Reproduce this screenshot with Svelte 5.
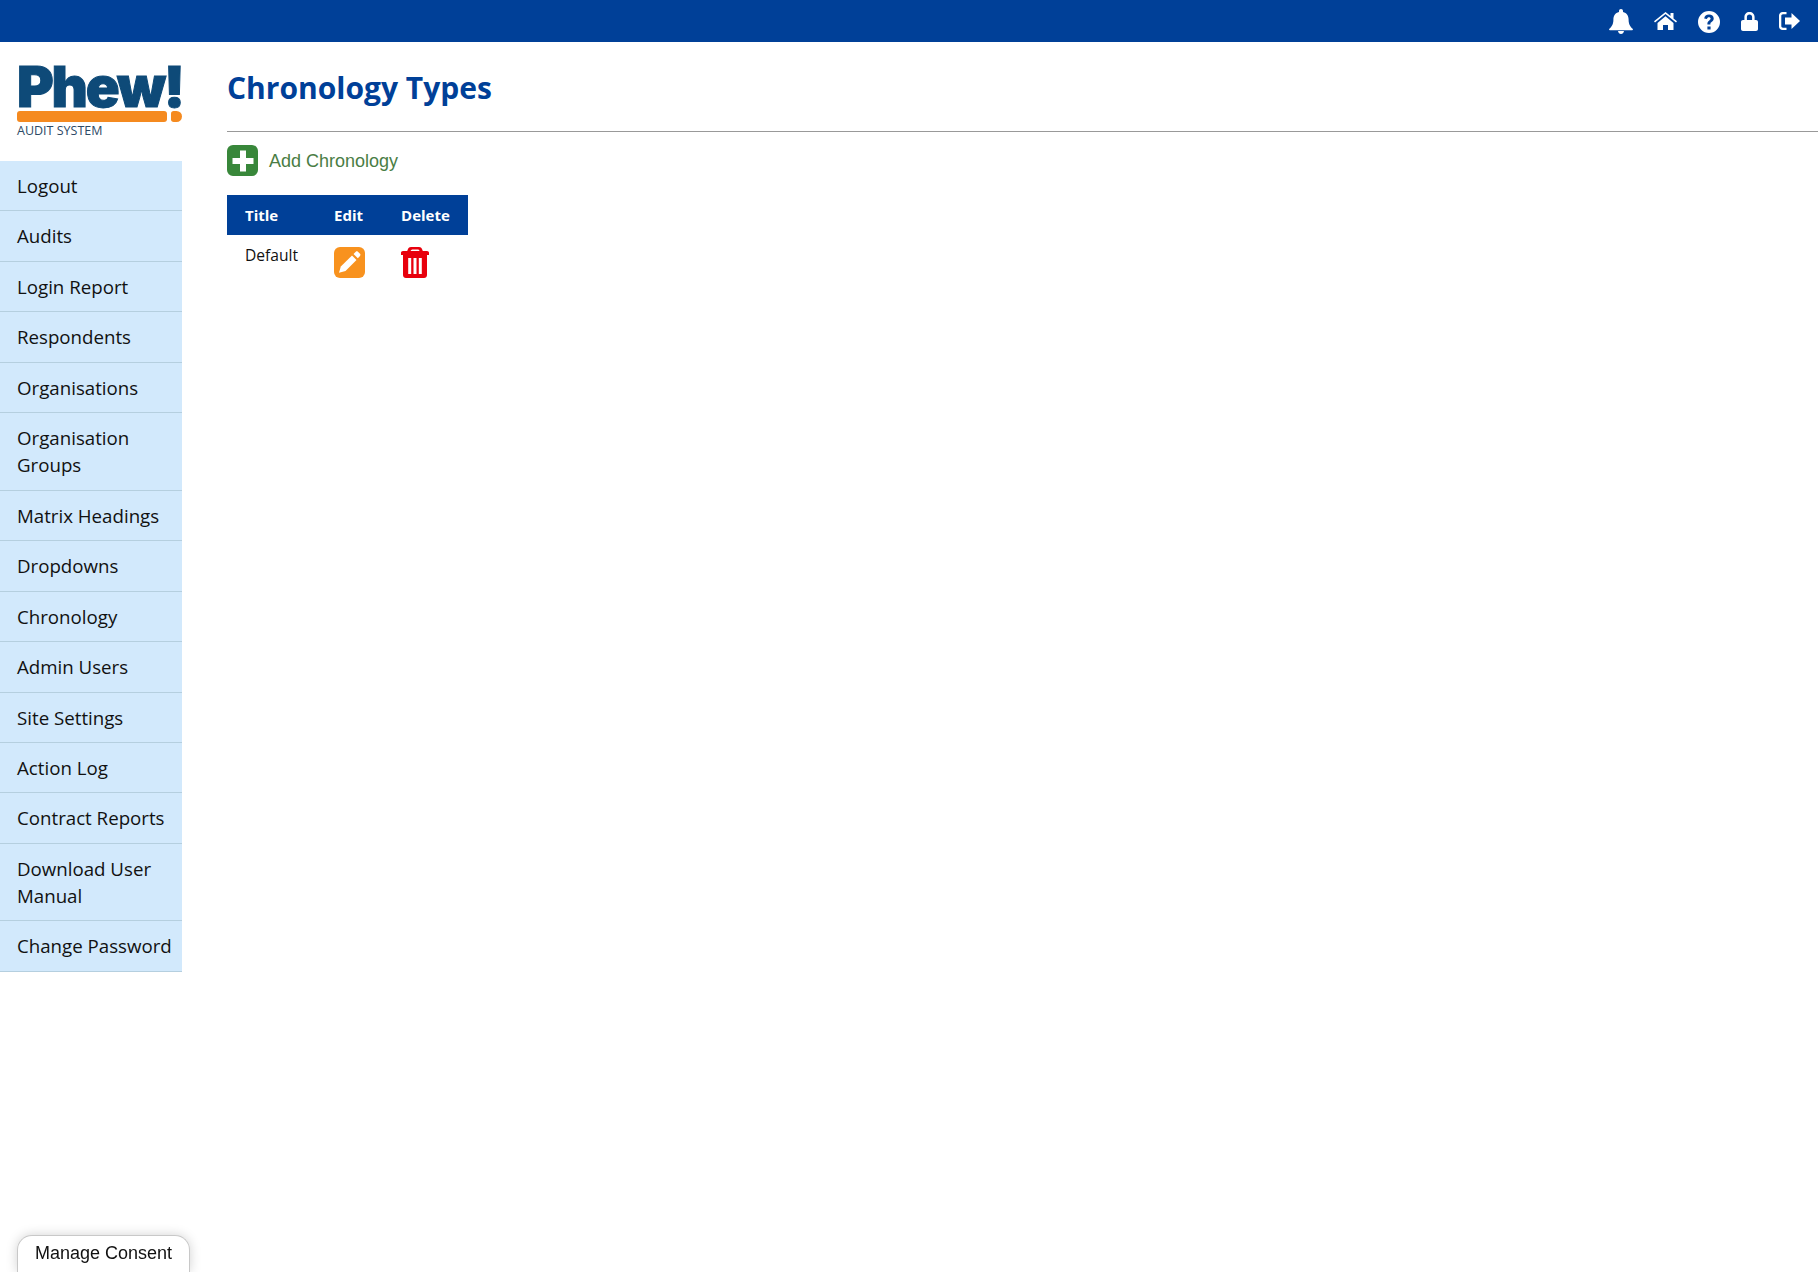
<script lang="ts">
  const menu = [
    "Logout",
    "Audits",
    "Login Report",
    "Respondents",
    "Organisations",
    "Organisation Groups",
    "Matrix Headings",
    "Dropdowns",
    "Chronology",
    "Admin Users",
    "Site Settings",
    "Action Log",
    "Contract Reports",
    "Download User Manual",
    "Change Password"
  ];
</script>

<header class="topbar">
  <svg class="ico" width="24" height="25" viewBox="0 0 24 25"><path d="M12 0c1.200 0 2 .9 2 2v.9c3.800.9 5.600 3.800 5.600 7.600 0 4.700 1.500 7 4 9.300.6.600.3 1.400-.5 1.400H.9c-.8 0-1.100-.8-.5-1.400 2.500-2.300 4-4.600 4-9.300 0-3.800 1.800-6.700 5.600-7.600V2c0-1.100.8-2 2-2zM9 22h6c-.3 1.700-1.500 3-3 3s-2.700-1.300-3-3z" /></svg>
  <svg class="ico" width="23" height="18" viewBox="0 0 23 18"><path d="M11.500 0 0 9.300l1 1.200L11.500 2 22 10.500l1-1.200-3.500-2.900V1h-3v3zM3.500 11v7h5.500v-5h5v5h5.500v-7l-8-6.700z" /></svg>
  <svg class="ico q" width="22" height="22" viewBox="0 0 22 22"><path fill-rule="evenodd" d="M11 0a11 11 0 1 1 0 22 11 11 0 0 1 0-22zM9.400 15.600v3h3.200v-3zM11 3.600c-2.700 0-4.500 1.400-4.800 3.900l2.800.5c.2-1.200.9-1.800 1.900-1.800s1.700.6 1.700 1.400c0 .7-.4 1.200-1.300 1.800-1.400.9-1.900 1.800-1.900 3.100v.9h3v-.6c0-.7.3-1.100 1.200-1.700 1.400-.9 2.100-2 2.100-3.500 0-2.400-1.900-4-4.700-4z" /></svg>
  <svg class="ico" width="17" height="19" viewBox="0 0 17 19"><path fill-rule="evenodd" d="M8.500 0c3 0 5.100 2.100 5.100 5v3h1.400c1.100 0 2 .9 2 2v7c0 1.100-.9 2-2 2H2c-1.100 0-2-.9-2-2v-7c0-1.100.9-2 2-2h1.400V5c0-2.900 2.100-5 5.100-5zm0 2.500c-1.600 0-2.600 1-2.600 2.600V8h5.200V5.100c0-1.600-1-2.600-2.600-2.600z" /></svg>
  <svg class="ico" width="21" height="18" viewBox="0 0 21 18"><path d="M7.500 0v2.300H4c-1 0-1.700.7-1.700 1.700v10c0 1 .7 1.700 1.700 1.700h3.500V18H3.600C1.600 18 0 16.400 0 14.400V3.600C0 1.600 1.600 0 3.600 0zM12.500 1 21 9l-8.500 8v-4.500H6v-7h6.500z" /></svg>
</header>

<div class="page">
  <aside class="sidebar">
    <div class="logo">
      <div class="logo-word">Phew!</div>
      <div class="logo-bar"><span class="bar-long"></span><span class="bar-dot"></span></div>
      <div class="logo-sub">AUDIT SYSTEM</div>
    </div>
    <nav class="menu">
      {#each menu as item}
        <a href="#top" class="menu-item">{item}</a>
      {/each}
    </nav>
  </aside>

  <main class="content">
    <h1>Chronology Types</h1>
    <hr />
    <a href="#top" class="add">
      <span class="add-btn">
        <svg width="24" height="24" viewBox="0 0 24 24"><path d="M9 1.500h6V9h7.500v6H15v7.500H9V15H1.500V9H9z" fill="#fff" /></svg>
      </span>
      <span class="add-label">Add Chronology</span>
    </a>
    <table>
      <thead>
        <tr><th>Title</th><th>Edit</th><th>Delete</th></tr>
      </thead>
      <tbody>
        <tr>
          <td class="name">Default</td>
          <td>
            <span class="edit-btn">
              <svg width="31" height="31" viewBox="0 0 31 31" fill="#fff"><path d="M18 8.500 22.500 13 11.500 24 5 25.800 6.800 19.500z" /><path d="M19.500 7 21.800 4.700c.6-.6 1.500-.6 2.100 0L26 6.800c.6.600.6 1.500 0 2.100L23.800 11.300z" /></svg>
            </span>
          </td>
          <td>
            <svg class="trash" width="28" height="31" viewBox="0 0 28 31"><path fill-rule="evenodd" d="M10 0h8c1.500 0 2.600.8 3 2l.8 2H26c1.100 0 2 .8 2 1.800V8h-2v20c0 1.700-1.300 3-3 3H5c-1.700 0-3-1.300-3-3V8H0V5.800C0 4.800.9 4 2 4h4.200L7 2c.4-1.200 1.500-2 3-2zm-.5 4h9l-.4-1c-.2-.4-.5-.6-1-.6h-5.800c-.5 0-.8.2-1 .6zM7.200 11v16h3V11zm5.300 0v16h3V11zm5.300 0v16h3V11z" fill="#e8000d" /></svg>
          </td>
        </tr>
      </tbody>
    </table>
  </main>
</div>

<button class="consent">Manage Consent</button>

<style>
  :global(body) {
    margin: 0;
    background: #fff;
    font-family: "Open Sans", "Noto Sans", sans-serif;
  }

  .topbar {
    height: 42px;
    background: #004098;
    display: flex;
    align-items: center;
    justify-content: flex-end;
    gap: 21px;
    padding-right: 18px;
  }

  .ico { fill: #fff; }
  .q { margin-top: 2px; }

  .page {
    display: flex;
  }

  .sidebar {
    width: 182px;
    flex: none;
  }

  .logo {
    padding: 22px 0 25px 17px;
    height: 72px;
  }

  .logo-word {
    font-family: Inter, sans-serif;
    font-weight: 900;
    font-size: 56px;
    line-height: 46px;
    letter-spacing: -2.200px;
    color: #0e4a78;
    -webkit-text-stroke: 1px #0e4a78;
  }

  .logo-bar {
    display: flex;
    gap: 4px;
    width: 165px;
    margin-top: 1px;
  }

  .bar-long {
    flex: 1;
    height: 11px;
    background: #f58a1f;
    border-radius: 3px;
  }

  .bar-dot {
    width: 11px;
    height: 11px;
    background: #f58a1f;
    border-radius: 3px 6px 6px 3px;
  }

  .logo-sub {
    font-size: 12.500px;
    line-height: 14px;
    margin-top: 2px;
    color: #2d4a66;
  }

  .menu {
    display: flex;
    flex-direction: column;
  }

  .menu-item {
    display: block;
    background: #d2e9fc;
    color: #111;
    text-decoration: none;
    font-size: 18.700px;
    line-height: 27px;
    padding: 11px 8px 11.460px 17px;
    border-bottom: 1px solid #b5cfdf;
  }

  .content {
    flex: 1;
    padding-left: 45px;
  }

  h1 {
    margin: 25px 0 0;
    font-size: 30px;
    line-height: 42px;
    font-weight: 700;
    color: #004098;
  }

  hr {
    margin: 22px 0 0;
    border: 0;
    border-top: 1px solid #999;
  }

  .add {
    display: flex;
    align-items: center;
    gap: 11px;
    height: 31px;
    margin-top: 13px;
    color: #4a7d45;
    text-decoration: none;
    font-family: "Liberation Sans", sans-serif;
    font-size: 18px;
    line-height: 24px;
  }

  .add-btn {
    width: 31px;
    height: 31px;
    border-radius: 6px;
    background: #38873a;
    display: flex;
    align-items: center;
    justify-content: center;
  }

  table {
    margin-top: 19px;
    border-collapse: collapse;
    font-size: 15.600px;
  }

  th {
    background: #004098;
    color: #fff;
    font-weight: 700;
    text-align: left;
    height: 40px;
    padding: 0 18px;
    font-size: 15px;
  }

  td {
    vertical-align: top;
    padding: 12px 18px 0;
    color: #111;
  }

  td.name { padding-top: 9px; }

  .edit-btn {
    width: 31px;
    height: 31px;
    border-radius: 6px;
    background: #f8921e;
    display: block;
  }

  .edit-btn svg, .trash { display: block; }

  .consent {
    position: fixed;
    left: 17px;
    bottom: 0;
    width: 173px;
    height: 37px;
    background: #fff;
    border: 1px solid #c8c8c8;
    border-bottom: 0;
    border-radius: 15px 15px 0 0;
    box-shadow: 0 0 12px rgba(0, 0, 0, 0.18);
    font-family: "Liberation Sans", sans-serif;
    font-size: 18px;
    color: #111;
    padding: 0 0 2px;
  }
</style>
